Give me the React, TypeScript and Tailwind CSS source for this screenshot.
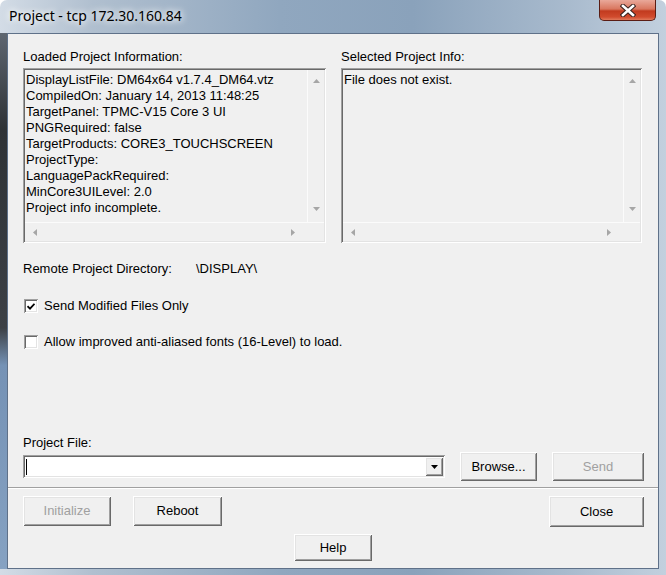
import React from "react";

type Dir = "up" | "down" | "left" | "right";

// small scroll / dropdown triangles
function Arrow({ dir, color = "#a6a6a6" }: { dir: Dir; color?: string }) {
  const vertical = dir === "up" || dir === "down";
  const pts = {
    up: "0,4 7,4 3.5,0",
    down: "0,0 7,0 3.5,4",
    left: "4,0 4,7 0,3.5",
    right: "0,0 0,7 4,3.5",
  }[dir];
  return (
    <svg width={vertical ? 7 : 4} height={vertical ? 4 : 7} viewBox={vertical ? "0 0 7 4" : "0 0 4 7"}>
      <polygon points={pts} fill={color} />
    </svg>
  );
}

const raised =
  "shadow-[inset_1px_1px_0_#ffffff,inset_-1px_-1px_0_#696969,inset_2px_2px_0_#e3e3e3,inset_-2px_-2px_0_#a0a0a0]";
const sunken =
  "shadow-[inset_1px_1px_0_#a0a0a0,inset_-1px_-1px_0_#ffffff,inset_2px_2px_0_#696969,inset_-2px_-2px_0_#e3e3e3]";

function Button({
  label,
  width,
  height,
  disabled,
}: {
  label: string;
  width: string;
  height: string;
  disabled?: boolean;
}) {
  return (
    <div
      className={`${width} ${height} ${raised} bg-[#f0f0f0] flex items-center justify-center ${
        disabled ? "text-[#a0a0a0]" : "text-black"
      }`}
    >
      {label}
    </div>
  );
}

function InfoBox({ lines, width }: { lines: string[]; width: string }) {
  return (
    <div className={`${width} h-[175px] ${sunken} p-[2px] flex flex-col bg-[#f0f0f0]`}>
      <div className="flex flex-1 min-h-0">
        <div className="flex-1 pt-[2px] pl-[1px] leading-[16px] whitespace-nowrap overflow-hidden">
          {lines.map((l, i) => (
            <div key={i}>{l}</div>
          ))}
        </div>
        <div className="w-[17px] border-l border-[#fbfbfb] flex flex-col items-center justify-between pt-[9px] pb-[11px]">
          <Arrow dir="up" />
          <Arrow dir="down" />
        </div>
      </div>
      <div className="h-[19px] flex border-t border-[#fbfbfb]">
        <div className="flex-1 flex items-center justify-between pl-[8px] pr-[12px]">
          <Arrow dir="left" />
          <Arrow dir="right" />
        </div>
        <div className="w-[17px] bg-[#f0f0f0]" />
      </div>
    </div>
  );
}

function Checkbox({ checked, label }: { checked?: boolean; label: string }) {
  return (
    <div className="flex items-center h-[16px]">
      <div className={`ml-[1px] w-[14px] h-[14px] bg-white ${sunken} flex items-center justify-center`}>
        {checked && (
          <svg width="8" height="7" viewBox="0 0 8 7">
            <path d="M0.5 3.2 L3 5.6 L7.5 0.8" stroke="#000" strokeWidth="1.8" fill="none" />
          </svg>
        )}
      </div>
      <span className="ml-[6px]">{label}</span>
    </div>
  );
}

export default function ProjectDialog() {
  const loaded = [
    "DisplayListFile: DM64x64 v1.7.4_DM64.vtz",
    "CompiledOn: January 14, 2013 11:48:25",
    "TargetPanel: TPMC-V15 Core 3 UI",
    "PNGRequired: false",
    "TargetProducts: CORE3_TOUCHSCREEN",
    "ProjectType:",
    "LanguagePackRequired:",
    "MinCore3UILevel: 2.0",
    "Project info incomplete.",
  ];

  return (
    <div className="w-[666px] h-[575px] flex flex-col rounded-t-[7px] overflow-hidden bg-[linear-gradient(90deg,#d3dce6_0%,#b0bfcf_14%,#90a7bf_42%,#8aa2bb_62%,#a8bacd_85%,#c2d0de_100%)] font-['Liberation_Sans',Arial,sans-serif] text-[13px] text-black">
      {/* title bar */}
      <div className="h-[33px] flex items-start justify-between">
        <div className="pl-[9px] pt-[6px] font-['Noto_Sans',sans-serif] text-[14px] leading-[20px] [text-shadow:0_0_6px_#ffffff,0_0_10px_#ffffff]">
          Project - tcp 172.30.160.84
        </div>
        <div className="mr-[10px] w-[57px] h-[21px] rounded-b-[5px] border border-t-0 border-[#5a1d14] bg-[linear-gradient(180deg,#e9a89a_0%,#d9775f_45%,#c23a1f_55%,#d14b2e_85%,#e07a5c_100%)] flex items-center justify-center">
          <svg width="16" height="13" viewBox="0 0 16 13">
            <path d="M3 2 L13 11 M13 2 L3 11" stroke="#3b2420" strokeWidth="4.6" strokeLinecap="square" />
            <path d="M3 2 L13 11 M13 2 L3 11" stroke="#ffffff" strokeWidth="2.6" strokeLinecap="square" />
          </svg>
        </div>
      </div>

      <div className="flex flex-1">
        <div className="w-[7px] bg-[linear-gradient(180deg,#5e6670_0%,#2e3236_18%,#3c4045_55%,#7592b5_62%,#86a2c2_100%)]" />

        {/* client area */}
        <div className="w-[652px] border border-[#5f7189] bg-[#f0f0f0] flex flex-col">
          <div className="pl-[15px] pr-[14px] pt-[15px] flex flex-col">
            <div className="flex gap-[15px]">
              <div className="flex flex-col">
                <div className="leading-[16px]">Loaded Project Information:</div>
                <div className="mt-[3px]">
                  <InfoBox lines={loaded} width="w-[303px]" />
                </div>
              </div>
              <div className="flex flex-col">
                <div className="leading-[16px]">Selected Project Info:</div>
                <div className="mt-[3px]">
                  <InfoBox lines={["File does not exist."]} width="w-[301px]" />
                </div>
              </div>
            </div>

            <div className="mt-[18px] leading-[16px] flex">
              <span className="w-[173px]">Remote Project Directory:</span>
              <span>\DISPLAY\</span>
            </div>

            <div className="mt-[21px]">
              <Checkbox checked label="Send Modified Files Only" />
            </div>
            <div className="mt-[20px]">
              <Checkbox label="Allow improved anti-aliased fonts (16-Level) to load." />
            </div>

            <div className="mt-[85px] leading-[16px]">Project File:</div>

            <div className="mt-[1px] h-[29px] flex items-center">
              <div className={`w-[422px] h-[23px] bg-white ${sunken} p-[2px] flex`}>
                <div className="flex-1 flex items-center pl-[1px]">
                  <div className="w-[1px] h-[16px] bg-black" />
                </div>
                <div className={`w-[18px] ${raised} bg-[#f0f0f0] flex items-center justify-center`}>
                  <Arrow dir="down" color="#000000" />
                </div>
              </div>
              <div className="ml-[15px]">
                <Button label="Browse..." width="w-[77px]" height="h-[29px]" />
              </div>
              <div className="ml-[15px]">
                <Button label="Send" width="w-[92px]" height="h-[29px]" disabled />
              </div>
            </div>
          </div>

          {/* separator */}
          <div className="mt-[6px] h-[2px] border-t border-[#a0a0a0] bg-white" />

          <div className="pl-[15px] pr-[14px] mt-[7px] flex items-start">
            <Button label="Initialize" width="w-[88px]" height="h-[30px]" disabled />
            <div className="ml-[22px]">
              <Button label="Reboot" width="w-[89px]" height="h-[30px]" />
            </div>
            <div className="ml-auto">
              <Button label="Close" width="w-[95px]" height="h-[31px]" />
            </div>
          </div>

          <div className="mt-[7px] flex justify-center">
            <Button label="Help" width="w-[78px]" height="h-[27px]" />
          </div>
        </div>

        <div className="w-[7px]" />
      </div>

      <div className="h-[6px]" />
    </div>
  );
}
